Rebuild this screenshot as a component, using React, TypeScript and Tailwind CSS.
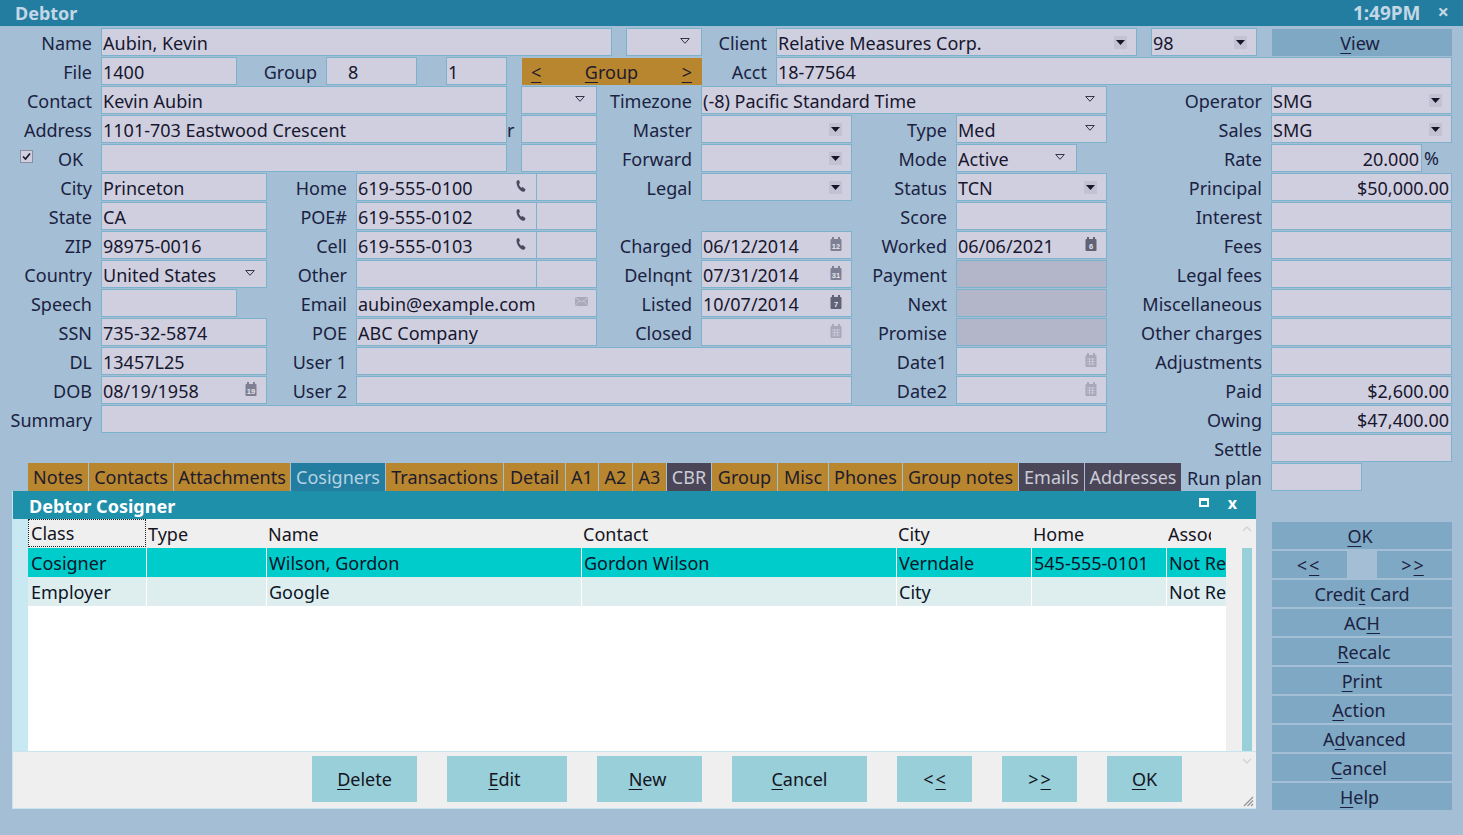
import type { ReactNode } from 'react';

// Debtor form: every row is a flex strip, 28px fields on a 29px pitch

function Label({ className = '', children }: { className?: string; children: ReactNode }) {
  return (
    <div className={`shrink-0 pt-[2px] pr-[9px] text-right whitespace-nowrap text-[#1b2240] ${className}`}>{children}</div>
  );
}

function Field({
  className = '',
  children,
  icon,
  right,
  muted,
}: {
  className?: string;
  children?: ReactNode;
  icon?: ReactNode;
  right?: boolean;
  muted?: boolean;
}) {
  return (
    <div
      className={`flex h-[28px] shrink-0 items-center border border-[#7db2cd] text-[#17172e] ${
        muted ? 'bg-[#b3b5c8]' : 'bg-[#d0cfe0]'
      } ${className}`}
    >
      <span className={`min-w-0 flex-1 whitespace-nowrap pt-[2px] leading-[24px] ${right ? 'pr-[2px] text-right' : 'pl-[1px]'}`}>
        {children}
      </span>
      {icon}
    </div>
  );
}

function SolidArrow() {
  return (
    <span className="mr-[9px] flex h-[13px] w-[13px] shrink-0 items-center justify-center bg-[#c3c2d3]">
      <svg width="9" height="5" viewBox="0 0 9 5">
        <path d="M0 0h9L4.5 5z" fill="#16162a" />
      </svg>
    </span>
  );
}

function OutlineArrow() {
  return (
    <svg width="10" height="6" viewBox="0 0 10 6" className="mr-[11px] mb-[2px] shrink-0">
      <path d="M.7.5h8.6L5 5.3z" fill="none" stroke="#34344a" strokeWidth="1" />
    </svg>
  );
}

function PhoneIcon() {
  return (
    <svg width="10" height="12" viewBox="0 0 10 12" className="mr-[10px] mb-[3px] shrink-0">
      <path
        d="M1.2.4 3 0l1 3-1.1.9c.3 1.3 1.2 2.9 2.4 3.8l1.300-.6L9.500 9.300 9 11c-.4.7-1.300 1-2.200.7C3.600 10.500 1 7 .5 3 .4 1.900.6 1 1.200.4z"
        fill="#4b4b60"
      />
    </svg>
  );
}

function MailIcon() {
  return (
    <svg width="13" height="9" viewBox="0 0 13 9" className="mr-[8px] mb-[3px] shrink-0">
      <rect width="13" height="9" fill="#a9a9ba" />
      <path d="M0 .5 6.500 5 13 .5M0 8.500 4.500 4M13 8.500 8.500 4" fill="none" stroke="#d0cfe0" strokeWidth=".8" />
    </svg>
  );
}

function CalIcon({ day, dark }: { day?: string; dark?: boolean }) {
  const fill = day ? (dark ? '#626276' : '#7f7f93') : '#a8a8ba';
  return (
    <svg width="12" height="14" viewBox="0 0 12 14" className="mr-[9px] mb-[3px] shrink-0">
      <rect x="2" y="0" width="2" height="3" fill={fill} />
      <rect x="8" y="0" width="2" height="3" fill={fill} />
      <rect x="0.500" y="2" width="11" height="12" rx="1" fill={fill} />
      {day ? (
        <text x="6" y="12" textAnchor="middle" fontSize="7.500" fontWeight="700" fontFamily="Liberation Sans, sans-serif" fill="#e6e6ee">
          {day}
        </text>
      ) : (
        <path d="M2 6h8M2 8.500h8M2 11h8M4.500 5v7.500M7.500 5v7.500" stroke="#d0cfe0" strokeWidth=".7" />
      )}
    </svg>
  );
}

function Row({ className = '', children }: { className?: string; children: ReactNode }) {
  return <div className={`mb-px flex h-[28px] items-center ${className}`}>{children}</div>;
}

function Mnemonic({ pre = '', u, post = '' }: { pre?: string; u: string; post?: string }) {
  return (
    <span>
      {pre}
      <u className="underline-offset-[3px]">{u}</u>
      {post}
    </span>
  );
}

function Arrows({ ch }: { ch: string }) {
  return (
    <span>
      {ch}
      <u className="ml-[2px] underline-offset-[3px]">{ch}</u>
    </span>
  );
}

const tabs = [
  { name: 'Notes', w: 'w-[60px]', kind: 'orange' },
  { name: 'Contacts', w: 'w-[84px]', kind: 'orange' },
  { name: 'Attachments', w: 'w-[116px]', kind: 'orange' },
  { name: 'Cosigners', w: 'w-[94px]', kind: 'active' },
  { name: 'Transactions', w: 'w-[117px]', kind: 'orange' },
  { name: 'Detail', w: 'w-[61px]', kind: 'orange' },
  { name: 'A1', w: 'w-[32px]', kind: 'orange' },
  { name: 'A2', w: 'w-[33px]', kind: 'orange' },
  { name: 'A3', w: 'w-[33px]', kind: 'orange' },
  { name: 'CBR', w: 'w-[44px]', kind: 'dark' },
  { name: 'Group', w: 'w-[65px]', kind: 'orange' },
  { name: 'Misc', w: 'w-[50px]', kind: 'orange' },
  { name: 'Phones', w: 'w-[73px]', kind: 'orange' },
  { name: 'Group notes', w: 'w-[115px]', kind: 'orange' },
  { name: 'Emails', w: 'w-[65px]', kind: 'dark' },
  { name: 'Addresses', w: 'w-[96px]', kind: 'dark' },
];

const tabColors: Record<string, string> = {
  orange: 'bg-[#b8862f] text-[#1e1b2c]',
  active: 'bg-[#237da0] text-[#b7d2e2]',
  dark: 'bg-[#4a4658] text-[#cbcdd9]',
};

const gridRows = [
  { bg: 'bg-[#00cccc]', cells: ['Cosigner', '', 'Wilson, Gordon', 'Gordon Wilson', 'Verndale', '545-555-0101', 'Not Req'] },
  { bg: 'bg-[#deeeee]', cells: ['Employer', '', 'Google', '', 'City', '', 'Not Req'] },
];

const gridCols = 'grid grid-cols-[118px_120px_315px_315px_135px_135px_60px]';

const dialogButtons = [
  { w: 'w-[105px]', label: <Mnemonic u="D" post="elete" /> },
  { w: 'w-[120px] pr-[5px]', label: <Mnemonic u="E" post="dit" /> },
  { w: 'w-[105px] pr-[4px]', label: <Mnemonic u="N" post="ew" /> },
  { w: 'w-[135px]', label: <Mnemonic u="C" post="ancel" /> },
  { w: 'w-[75px]', label: <Arrows ch="<" /> },
  { w: 'w-[75px]', label: <Arrows ch=">" /> },
  { w: 'w-[75px]', label: <Mnemonic u="O" post="K" /> },
];

const sideButtons = [
  { label: <Mnemonic pre="Credi" u="t" post=" Card" />, pad: 'pr-0' },
  { label: <Mnemonic pre="AC" u="H" />, pad: 'pr-0' },
  { label: <Mnemonic u="R" post="ecalc" />, pad: 'pl-[4px]' },
  { label: <Mnemonic u="P" post="rint" />, pad: 'pl-0' },
  { label: <Mnemonic u="A" post="ction" />, pad: 'pr-[6px]' },
  { label: <Mnemonic pre="A" u="d" post="vanced" />, pad: 'pl-[5px]' },
  { label: <Mnemonic u="C" post="ancel" />, pad: 'pr-[6px]' },
  { label: <Mnemonic u="H" post="elp" />, pad: 'pr-[5px]' },
];

function SideButton({ className = '', children }: { className?: string; children: ReactNode }) {
  return (
    <button className={`flex h-[27px] items-center justify-center bg-[#7fa8c4] text-[#1b2240] ${className}`}>
      {children}
    </button>
  );
}

export default function App() {
  return (
    <div className="flex h-[835px] w-[1463px] flex-col overflow-hidden bg-[#a4bed6] font-['Noto_Sans',sans-serif] text-[18px] leading-none">
      {/* Title bar */}
      <div className="flex h-[26px] shrink-0 items-center bg-[#237da0] pl-[15px] font-bold text-[#c3d7e6]">
        <span className="flex-1">Debtor</span>
        <span className="text-[19px]">1:49PM</span>
        <span className="mr-[14px] mb-[3px] ml-[17px] text-[20px] leading-[22px]">×</span>
      </div>

      <div className="pt-[2px] pr-[11px]">
        <Row>
          <Label className="w-[101px]">Name</Label>
          <Field className="w-[511px]">Aubin, Kevin</Field>
          <Field className="ml-[14px] w-[76px]" icon={<OutlineArrow />} />
          <Label className="w-[74px]">Client</Label>
          <Field className="w-[361px]" icon={<SolidArrow />}>Relative Measures Corp.</Field>
          <Field className="ml-[14px] w-[106px]" icon={<SolidArrow />}>98</Field>
          <SideButton className="mt-px ml-[15px] w-[180px] pr-[4px]"><Mnemonic u="V" post="iew" /></SideButton>
        </Row>
        <Row>
          <Label className="w-[101px]">File</Label>
          <Field className="w-[136px]">1400</Field>
          <Label className="w-[89px]">Group</Label>
          <Field className="w-[91px] pl-[20px]">8</Field>
          <Field className="ml-[29px] w-[61px]">1</Field>
          <button className="mt-px ml-[15px] flex h-[27px] w-[180px] items-center justify-between bg-[#b8862f] pr-[10px] pl-[9px] text-[#1e1b2c]">
            <u className="underline-offset-[3px]">&lt;</u>
            <Mnemonic u="G" post="roup" />
            <u className="underline-offset-[3px]">&gt;</u>
          </button>
          <Label className="w-[74px]">Acct</Label>
          <Field className="w-[676px]">18-77564</Field>
        </Row>
        <Row>
          <Label className="w-[101px]">Contact</Label>
          <Field className="w-[406px]">Kevin Aubin</Field>
          <Field className="ml-[14px] w-[76px]" icon={<OutlineArrow />} />
          <Label className="w-[104px]">Timezone</Label>
          <Field className="w-[406px]" icon={<OutlineArrow />}>(-8) Pacific Standard Time</Field>
          <Label className="w-[164px]">Operator</Label>
          <Field className="w-[181px]" icon={<SolidArrow />}>SMG</Field>
        </Row>
        <Row>
          <Label className="w-[101px]">Address</Label>
          <Field className="w-[406px]">1101-703 Eastwood Crescent</Field>
          <span className="w-[14px] pt-[2px] text-[#1b2240]">r</span>
          <Field className="w-[76px]" />
          <Label className="w-[104px]">Master</Label>
          <Field className="w-[151px]" icon={<SolidArrow />} />
          <Label className="w-[104px]">Type</Label>
          <Field className="w-[151px]" icon={<OutlineArrow />}>Med</Field>
          <Label className="w-[164px]">Sales</Label>
          <Field className="w-[181px]" icon={<SolidArrow />}>SMG</Field>
        </Row>
        <Row>
          <div className="flex w-[101px] shrink-0 items-center pl-[20px]">
            <span className="mb-[4px] flex h-[13px] w-[13px] items-center justify-center border border-[#8c8ca2] bg-[#d0cfe0]">
              <svg width="9" height="9" viewBox="0 0 9 9">
                <path d="M1 4.500 3.500 7 8 1.500" fill="none" stroke="#14142a" strokeWidth="1.600" />
              </svg>
            </span>
            <span className="ml-[25px] pt-[2px] text-[#1b2240]">OK</span>
          </div>
          <Field className="w-[406px]" />
          <Field className="ml-[14px] w-[76px]" />
          <Label className="w-[104px]">Forward</Label>
          <Field className="w-[151px]" icon={<SolidArrow />} />
          <Label className="w-[104px]">Mode</Label>
          <Field className="w-[121px]" icon={<OutlineArrow />}>Active</Field>
          <Label className="w-[194px]">Rate</Label>
          <Field className="w-[151px]" right>20.000</Field>
          <span className="ml-[2px] text-[#1b2240]">%</span>
        </Row>
        <Row>
          <Label className="w-[101px]">City</Label>
          <Field className="w-[166px]">Princeton</Field>
          <Label className="w-[89px]">Home</Label>
          <Field className="w-[181px]" icon={<PhoneIcon />}>619-555-0100</Field>
          <Field className="-ml-px w-[61px]" />
          <Label className="w-[104px]">Legal</Label>
          <Field className="w-[151px]" icon={<SolidArrow />} />
          <Label className="w-[104px]">Status</Label>
          <Field className="w-[151px]" icon={<SolidArrow />}>TCN</Field>
          <Label className="w-[164px]">Principal</Label>
          <Field className="w-[181px]" right>$50,000.00</Field>
        </Row>
        <Row>
          <Label className="w-[101px]">State</Label>
          <Field className="w-[166px]">CA</Field>
          <Label className="w-[89px]">POE#</Label>
          <Field className="w-[181px]" icon={<PhoneIcon />}>619-555-0102</Field>
          <Field className="-ml-px w-[61px]" />
          <Label className="w-[359px]">Score</Label>
          <Field className="w-[151px]" />
          <Label className="w-[164px]">Interest</Label>
          <Field className="w-[181px]" />
        </Row>
        <Row>
          <Label className="w-[101px]">ZIP</Label>
          <Field className="w-[166px]">98975-0016</Field>
          <Label className="w-[89px]">Cell</Label>
          <Field className="w-[181px]" icon={<PhoneIcon />}>619-555-0103</Field>
          <Field className="-ml-px w-[61px]" />
          <Label className="w-[104px]">Charged</Label>
          <Field className="w-[151px]" icon={<CalIcon day="12" />}>06/12/2014</Field>
          <Label className="w-[104px]">Worked</Label>
          <Field className="w-[151px]" icon={<CalIcon day="6" dark />}>06/06/2021</Field>
          <Label className="w-[164px]">Fees</Label>
          <Field className="w-[181px]" />
        </Row>
        <Row>
          <Label className="w-[101px]">Country</Label>
          <Field className="w-[166px]" icon={<OutlineArrow />}>United States</Field>
          <Label className="w-[89px]">Other</Label>
          <Field className="w-[181px]" />
          <Field className="-ml-px w-[61px]" />
          <Label className="w-[104px]">Delnqnt</Label>
          <Field className="w-[151px]" icon={<CalIcon day="31" />}>07/31/2014</Field>
          <Label className="w-[104px]">Payment</Label>
          <Field className="w-[151px]" muted />
          <Label className="w-[164px]">Legal fees</Label>
          <Field className="w-[181px]" />
        </Row>
        <Row>
          <Label className="w-[101px]">Speech</Label>
          <Field className="w-[136px]" />
          <Label className="w-[119px]">Email</Label>
          <Field className="w-[241px]" icon={<MailIcon />}>aubin@example.com</Field>
          <Label className="w-[104px]">Listed</Label>
          <Field className="w-[151px]" icon={<CalIcon day="7" dark />}>10/07/2014</Field>
          <Label className="w-[104px]">Next</Label>
          <Field className="w-[151px]" muted />
          <Label className="w-[164px]">Miscellaneous</Label>
          <Field className="w-[181px]" />
        </Row>
        <Row>
          <Label className="w-[101px]">SSN</Label>
          <Field className="w-[166px]">735-32-5874</Field>
          <Label className="w-[89px]">POE</Label>
          <Field className="w-[241px]">ABC Company</Field>
          <Label className="w-[104px]">Closed</Label>
          <Field className="w-[151px]" icon={<CalIcon />} />
          <Label className="w-[104px]">Promise</Label>
          <Field className="w-[151px]" muted />
          <Label className="w-[164px]">Other charges</Label>
          <Field className="w-[181px]" />
        </Row>
        <Row>
          <Label className="w-[101px]">DL</Label>
          <Field className="w-[166px]">13457L25</Field>
          <Label className="w-[89px]">User 1</Label>
          <Field className="w-[496px]" />
          <Label className="w-[104px]">Date1</Label>
          <Field className="w-[151px]" icon={<CalIcon />} />
          <Label className="w-[164px]">Adjustments</Label>
          <Field className="w-[181px]" />
        </Row>
        <Row>
          <Label className="w-[101px]">DOB</Label>
          <Field className="w-[166px]" icon={<CalIcon day="19" />}>08/19/1958</Field>
          <Label className="w-[89px]">User 2</Label>
          <Field className="w-[496px]" />
          <Label className="w-[104px]">Date2</Label>
          <Field className="w-[151px]" icon={<CalIcon />} />
          <Label className="w-[164px]">Paid</Label>
          <Field className="w-[181px]" right>$2,600.00</Field>
        </Row>
        <Row>
          <Label className="w-[101px]">Summary</Label>
          <Field className="w-[1006px]" />
          <Label className="w-[164px]">Owing</Label>
          <Field className="w-[181px]" right>$47,400.00</Field>
        </Row>
        <Row className="justify-end">
          <Label>Settle</Label>
          <Field className="w-[181px]" />
        </Row>
        {/* Tab strip */}
        <div className="flex h-[28px] pl-[28px]">
          <div className="flex gap-px">
            {tabs.map((tab) => (
              <div key={tab.name} className={`flex items-center justify-center whitespace-nowrap ${tab.w} ${tabColors[tab.kind]}`}>
                {tab.name}
              </div>
            ))}
          </div>
          <Label className="flex w-[90px] items-center justify-end">Run plan</Label>
          <Field className="w-[91px]" />
        </div>
      </div>

      <div className="flex">
        {/* Cosigner dialog */}
        <div className="relative ml-[12px] h-[318px] w-[1244px] shrink-0 border-b border-l border-[#c8e4ee] bg-[#efefef]">
          <div className="flex h-[28px] items-center bg-[#1e90aa] pl-[16px] font-bold text-white">
            <span className="flex-1 pt-[2px]">Debtor Cosigner</span>
            <span className="mb-[5px] box-border h-[9px] w-[10px] border-x-[2px] border-t-[3px] border-b-[2px] border-white" />
            <span className="mr-[19px] mb-[4px] ml-[19px] text-[16px]">x</span>
          </div>
          <div className="flex h-[232px]">
            <div className="w-[15px] shrink-0 bg-[#c8e8f2]" />
            <div className="w-[1198px] shrink-0 bg-white">
              <div className={`${gridCols} h-[29px] bg-[#efefef] text-[#14141e]`}>
                {['Class', 'Type', 'Name', 'Contact', 'City', 'Home', 'Assoc'].map((title, i) => (
                  <div
                    key={title}
                    className={
                      i === 0
                        ? 'flex h-[28px] items-center border border-dotted border-[#222] pl-[2px]'
                        : 'flex items-center overflow-hidden pl-[2px]'
                    }
                  >
                    <span className={i === 6 ? 'w-[43px] overflow-hidden leading-[24px]' : 'leading-[24px]'}>{title}</span>
                  </div>
                ))}
              </div>
              {gridRows.map((row) => (
                <div key={row.cells[0]} className={`${gridCols} h-[29px] text-[#0c1428] ${row.bg}`}>
                  {row.cells.map((cell, i) => (
                    <div
                      key={i}
                      className={`flex items-center overflow-hidden whitespace-nowrap ${
                        i === 0 ? 'pl-[3px]' : 'border-l border-white pl-[2px]'
                      }`}
                    >
                      {cell}
                    </div>
                  ))}
                </div>
              ))}
            </div>
            {/* Scroll bar */}
            <div className="flex w-[30px] flex-col items-end pr-[4px]">
              <svg width="10" height="6" viewBox="0 0 10 6" className="mt-[7px] mb-[16px]">
                <path d="M1 5 5 1l4 4" fill="none" stroke="#cfd6d8" strokeWidth="1.500" />
              </svg>
              <div className="h-[203px] w-[10px] bg-[#98cfd9]" />
            </div>
          </div>
          <div className="relative flex h-[57px] gap-[30px] border-t border-[#c8e4ee] pt-[4px] pl-[299px]">
            {dialogButtons.map((btn, i) => (
              <button key={i} className={`flex h-[46px] items-center justify-center bg-[#98cfd9] text-[#14141e] ${btn.w}`}>
                {btn.label}
              </button>
            ))}
            <svg width="10" height="6" viewBox="0 0 10 6" className="absolute top-[6px] right-[4px]">
              <path d="M1 1l4 4 4-4" fill="none" stroke="#cfd6d8" strokeWidth="1.500" />
            </svg>
            <svg width="11" height="11" viewBox="0 0 11 11" className="absolute right-[2px] bottom-[1px]">
              <path d="M1 10 10 1M4.500 10 10 4.500M8 10l2-2" stroke="#8b9396" strokeWidth="1.100" />
            </svg>
          </div>
        </div>

        {/* Action buttons */}
        <div className="mt-[31px] ml-[16px] flex w-[180px] flex-col gap-[2px]">
          <SideButton className="pr-[4px]"><Mnemonic u="O" post="K" /></SideButton>
          <div className="flex justify-between">
            <SideButton className="w-[75px] pr-[3px]"><Arrows ch="<" /></SideButton>
            <SideButton className="w-[75px] pr-[4px]"><Arrows ch=">" /></SideButton>
          </div>
          {sideButtons.map((btn, i) => (
            <SideButton key={i} className={btn.pad}>{btn.label}</SideButton>
          ))}
        </div>
      </div>
    </div>
  );
}
